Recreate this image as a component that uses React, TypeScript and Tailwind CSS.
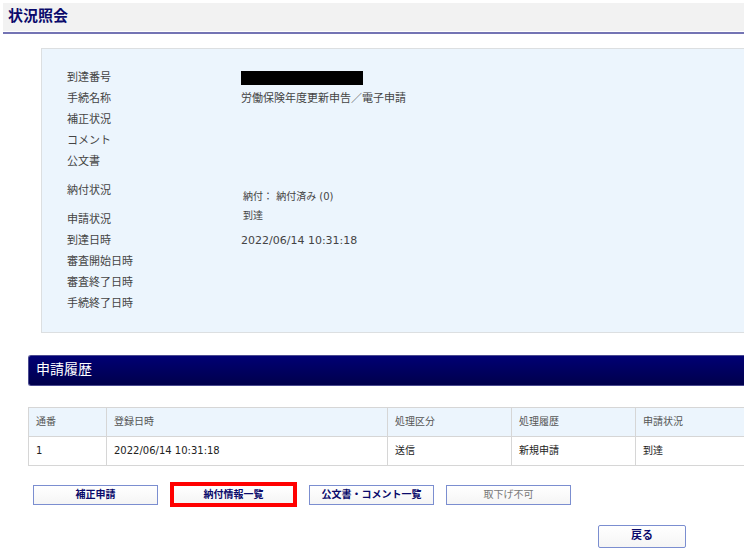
import React from 'react';
import clsx from 'clsx';

interface DetailItem {
  label: string;
  value?: React.ReactNode;
  rowClass?: string;
  valueClass?: string;
}

const details: DetailItem[] = [
  { label: '到達番号', value: <span className="block h-[14px] w-[122px] bg-black" /> },
  { label: '手続名称', value: '労働保険年度更新申告／電子申請' },
  { label: '補正状況' },
  { label: 'コメント' },
  { label: '公文書' },
  {
    label: '納付状況',
    value: '納付： 納付済み (0)',
    rowClass: 'h-[37px]',
    valueClass: 'pl-[2px] pt-3 text-[10px]',
  },
  { label: '申請状況', value: '到達', valueClass: 'pl-[2px] pb-2 text-[10px]' },
  { label: '到達日時', value: '2022/06/14 10:31:18' },
  { label: '審査開始日時' },
  { label: '審査終了日時' },
  { label: '手続終了日時' },
];

const columns = [
  { title: '通番', width: 'w-[78px]' },
  { title: '登録日時', width: 'w-[281px]' },
  { title: '処理区分', width: 'w-[124px]' },
  { title: '処理履歴', width: 'w-[124px]' },
  { title: '申請状況', width: '' },
];

const history = [['1', '2022/06/14 10:31:18', '送信', '新規申請', '到達']];

const buttonBase =
  'border border-[#7b8ed0] bg-linear-to-b from-white to-[#f5f5f5] text-center font-bold text-[#0a0a6b]';

const DetailPanel: React.FC = () => (
  <dl className="ml-[38px] mt-[14px] border border-r-0 border-[#dcdfe1] bg-[#ecf5fd] py-[18px] pl-[25px] text-[11px] leading-[14px] text-[#444]">
    {details.map(item => (
      <div key={item.label} className={clsx('flex items-center', item.rowClass ?? 'h-[21px]')}>
        <dt className="w-[174px] shrink-0">{item.label}</dt>
        <dd className={item.valueClass}>{item.value}</dd>
      </div>
    ))}
  </dl>
);

const HistoryTable: React.FC = () => (
  <table className="mt-[21px] w-full table-fixed border-collapse border border-r-0 border-[#d6d6d6] text-left text-[10px] leading-[14px]">
    <thead>
      <tr className="h-[29px] bg-[#ecf5fd] text-[#555]">
        {columns.map(col => (
          <th
            key={col.title}
            scope="col"
            className={clsx('border border-[#d6d6d6] px-[7px] font-normal last:border-r-0', col.width)}
          >
            {col.title}
          </th>
        ))}
      </tr>
    </thead>
    <tbody>
      {history.map(row => (
        <tr key={row[0]} className="h-[29px] text-[#222]">
          {row.map((cell, i) => (
            <td key={columns[i].title} className="border border-[#d6d6d6] px-[7px] last:border-r-0">{cell}</td>
          ))}
        </tr>
      ))}
    </tbody>
  </table>
);

const App: React.FC = () => {
  return (
    <main className="overflow-hidden bg-white pb-[7px] pl-[3px] pr-px pt-[3px] font-['DejaVu_Sans','Noto_Sans_CJK_JP',sans-serif]">
      <header className="border-b-2 border-[#7474b4] pb-px">
        <h1 className="bg-[#f2f2f2] pb-px pl-[5px] text-[15px] font-bold leading-[27px] text-[#0a0a6b]">状況照会</h1>
      </header>

      <DetailPanel />

      <section className="ml-[25px] mt-[22px]">
        <h2 className="h-[31px] rounded-l-[3px] border border-r-0 border-[#4a4a90] bg-linear-to-b from-[#000074] to-[#00004c] pl-[7px] text-[14px] leading-[27px] text-white">
          申請履歴
        </h2>
        <HistoryTable />
      </section>

      <div className="ml-[30px] mt-4 flex items-center gap-3 text-[10px]">
        <button type="button" className={clsx(buttonBase, 'h-5 w-[125px]')}>補正申請</button>
        {/* highlighted action */}
        <button
          type="button"
          className="h-[25px] w-[127px] border-4 border-[#ff0000] bg-linear-to-b from-white to-[#f5f5f5] text-center font-bold leading-[14px] text-[#0a0a6b]"
        >
          納付情報一覧
        </button>
        <button type="button" className={clsx(buttonBase, 'h-5 w-[125px]')}>公文書・コメント一覧</button>
        <button
          type="button"
          disabled
          className="h-5 w-[125px] border border-[#7b8ed0] bg-linear-to-b from-white to-[#f5f5f5] text-center text-[#777]"
        >
          取下げ不可
        </button>
      </div>

      <div className="mr-[58px] mt-[18px] flex justify-end">
        <button type="button" className={clsx(buttonBase, 'h-[23px] w-[88px] rounded-[2px] text-[11px]')}>戻る</button>
      </div>
    </main>
  );
};

export default App;
